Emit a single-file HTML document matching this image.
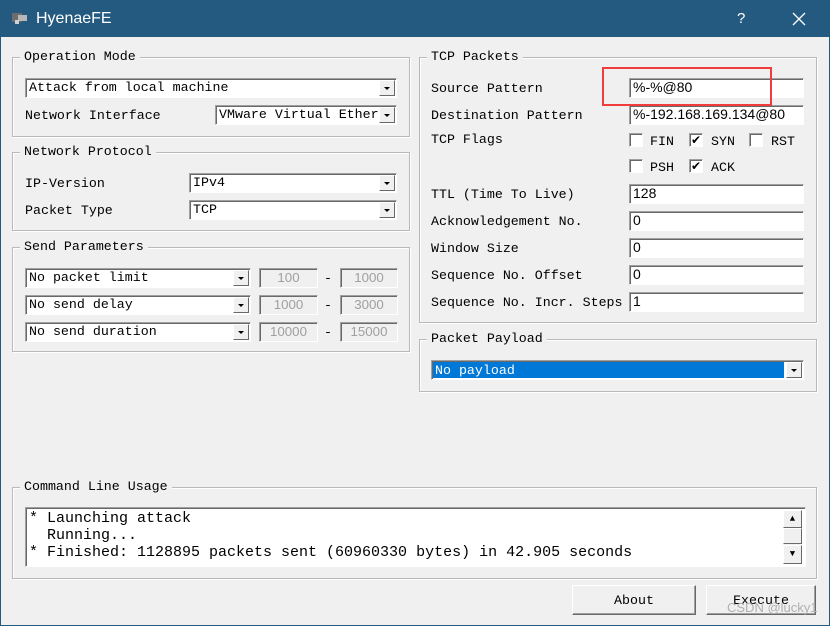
<!DOCTYPE html>
<html><head><meta charset="utf-8"><style>
*{margin:0;padding:0;box-sizing:border-box}
body{width:830px;height:626px;background:#f0f0f0;position:relative;overflow:hidden;font-family:"Liberation Mono","Noto Sans CJK SC",monospace;font-size:13.3px;color:#000}
.a{position:absolute}
#tb{left:0;top:0;width:830px;height:37px;background:#245a80}
#frame{left:0;top:37px;width:830px;height:589px;border:1px solid #245a80;border-top:none}
.g{position:absolute;border:1px solid #b9b9b9;box-shadow:1px 1px 0 #fff inset,1px 1px 0 #fff}
.gt{position:absolute;background:#f0f0f0;padding:0 4px;line-height:16px;top:-9px;left:7px;white-space:pre}
.l{position:absolute;line-height:16px;white-space:pre;margin-top:1px}
.c{position:absolute;background:#fff;border:1px solid;border-color:#a0a0a0 #fff #fff #a0a0a0;box-shadow:inset 1px 1px 0 #696969;height:20px;line-height:17px;padding-left:3px;white-space:pre;overflow:hidden}
.c .dd{position:absolute;right:1px;top:1px;width:16px;height:16px;background:#f0f0f0;border:1px solid;border-color:#fff #696969 #696969 #fff}
.c .dd:after{content:"";position:absolute;left:4px;top:6px;border-left:3.5px solid transparent;border-right:3.5px solid transparent;border-top:3.5px solid #000}
.d{background:#f0f0f0;color:#a0a0a0;text-align:center;padding:0;font-family:"Liberation Sans",sans-serif}
.i{font-family:"Liberation Sans",sans-serif;font-size:14px}
.cb{position:absolute;width:14px;height:14px;background:#fff;border:1px solid;border-color:#a0a0a0 #fff #fff #a0a0a0;box-shadow:inset 1px 1px 0 #696969;font-size:12px;line-height:12px;text-align:center;font-family:"DejaVu Sans",sans-serif}
.btn{position:absolute;height:30px;background:#f0f0f0;border:1px solid;border-color:#fff #696969 #696969 #fff;box-shadow:inset -1px -1px 0 #a0a0a0;text-align:center;line-height:29px}
</style></head><body>
<div id="tb" class="a">
 <div class="a" style="left:12px;top:13px;width:10px;height:9px;background:#6d6d6d"></div>
 <div class="a" style="left:18px;top:15px;width:9px;height:6px;background:#b8b8b8"></div>
 <div class="a" style="left:15px;top:20px;width:4px;height:4px;background:#d0d0d0"></div>
 <div class="a" style="left:36px;top:9px;color:#fff;font-family:'Liberation Sans',sans-serif;font-size:16px;line-height:20px">HyenaeFE</div>
 <div class="a" style="left:737px;top:9px;color:#fff;font-family:'Liberation Sans',sans-serif;font-size:15px;line-height:20px">?</div>
 <svg class="a" style="left:792px;top:12px" width="14" height="14"><path d="M1 1L13 13M13 1L1 13" stroke="#fff" stroke-width="1.3"/></svg>
</div>
<div id="frame" class="a"></div>

<div class="g" style="left:12px;top:57px;width:398px;height:80px"><div class="gt">Operation Mode</div></div>
<div class="c" style="left:25px;top:78px;width:372px">Attack from local machine<div class="dd"></div></div>
<div class="l" style="left:25px;top:107px">Network Interface</div>
<div class="c" style="left:215px;top:105px;width:182px">VMware Virtual Ether<div class="dd"></div></div>

<div class="g" style="left:12px;top:152px;width:398px;height:79px"><div class="gt">Network Protocol</div></div>
<div class="l" style="left:25px;top:175px">IP-Version</div>
<div class="c" style="left:189px;top:173px;width:208px">IPv4<div class="dd"></div></div>
<div class="l" style="left:25px;top:202px">Packet Type</div>
<div class="c" style="left:189px;top:200px;width:208px">TCP<div class="dd"></div></div>

<div class="g" style="left:12px;top:247px;width:398px;height:105px"><div class="gt">Send Parameters</div></div>
<div class="c" style="left:25px;top:268px;width:226px">No packet limit<div class="dd"></div></div>
<div class="c d" style="left:259px;top:268px;width:59px">100</div><div class="l" style="left:324px;top:270px">-</div>
<div class="c d" style="left:340px;top:268px;width:58px">1000</div>
<div class="c" style="left:25px;top:295px;width:226px">No send delay<div class="dd"></div></div>
<div class="c d" style="left:259px;top:295px;width:59px">1000</div><div class="l" style="left:324px;top:297px">-</div>
<div class="c d" style="left:340px;top:295px;width:58px">3000</div>
<div class="c" style="left:25px;top:322px;width:226px">No send duration<div class="dd"></div></div>
<div class="c d" style="left:259px;top:322px;width:59px">10000</div><div class="l" style="left:324px;top:324px">-</div>
<div class="c d" style="left:340px;top:322px;width:58px">15000</div>

<div class="g" style="left:419px;top:57px;width:398px;height:266px"><div class="gt">TCP Packets</div></div>
<div class="l" style="left:431px;top:80px">Source Pattern</div>
<div class="c i" style="left:629px;top:78px;width:175px">%-%@80</div>
<div class="l" style="left:431px;top:107px">Destination Pattern</div>
<div class="c i" style="left:629px;top:105px;width:175px">%-192.168.169.134@80</div>
<div class="l" style="left:431px;top:131px">TCP Flags</div>
<div class="cb" style="left:629px;top:133px"></div><div class="l" style="left:650px;top:133px">FIN</div>
<div class="cb" style="left:689px;top:133px">✔</div><div class="l" style="left:711px;top:133px">SYN</div>
<div class="cb" style="left:749px;top:133px"></div><div class="l" style="left:771px;top:133px">RST</div>
<div class="cb" style="left:629px;top:159px"></div><div class="l" style="left:650px;top:159px">PSH</div>
<div class="cb" style="left:689px;top:159px">✔</div><div class="l" style="left:711px;top:159px">ACK</div>
<div class="l" style="left:431px;top:186px">TTL (Time To Live)</div>
<div class="c i" style="left:629px;top:184px;width:175px">128</div>
<div class="l" style="left:431px;top:213px">Acknowledgement No.</div>
<div class="c i" style="left:629px;top:211px;width:175px">0</div>
<div class="l" style="left:431px;top:240px">Window Size</div>
<div class="c i" style="left:629px;top:238px;width:175px">0</div>
<div class="l" style="left:431px;top:267px">Sequence No. Offset</div>
<div class="c i" style="left:629px;top:265px;width:175px">0</div>
<div class="l" style="left:431px;top:294px">Sequence No. Incr. Steps</div>
<div class="c i" style="left:629px;top:292px;width:175px">1</div>
<div class="a" style="left:602px;top:67px;width:170px;height:39px;border:2px solid #f03c3c"></div>

<div class="g" style="left:419px;top:339px;width:398px;height:53px"><div class="gt">Packet Payload</div></div>
<div class="c" style="left:431px;top:360px;width:373px;padding-left:1px"><div class="a" style="left:1px;top:1px;right:19px;bottom:1px;background:#0078d7;color:#fff;padding-left:2px;line-height:17px">No payload</div><div class="dd"></div></div>

<div class="g" style="left:12px;top:487px;width:805px;height:92px"><div class="gt">Command Line Usage</div></div>
<div class="c" style="left:25px;top:507px;width:781px;height:60px;line-height:17px;padding-top:2px;font-size:15px">* Launching attack
  Running...
* Finished: 1128895 packets sent (60960330 bytes) in 42.905 seconds</div>
<div class="a" style="left:783px;top:510px;width:19px;height:54px;background:#f0f0f0"></div>
<div class="a" style="left:783px;top:510px;width:19px;height:18px;border:1px solid;border-color:#fff #696969 #696969 #fff;font-size:9px;text-align:center;line-height:16px">▲</div>
<div class="a" style="left:783px;top:528px;width:19px;height:16px;border:1px solid;border-color:#fff #696969 #696969 #fff"></div>
<div class="a" style="left:783px;top:545px;width:19px;height:19px;border:1px solid;border-color:#fff #696969 #696969 #fff;font-size:9px;text-align:center;line-height:17px">▼</div>

<div class="btn" style="left:572px;top:585px;width:124px">About</div>
<div class="btn" style="left:706px;top:585px;width:110px">Execute</div>
<div class="a" style="left:727px;top:600px;color:#b0b0b0;font-family:'Liberation Sans',sans-serif;font-size:13px">CSDN @lucky1</div>
</body></html>
